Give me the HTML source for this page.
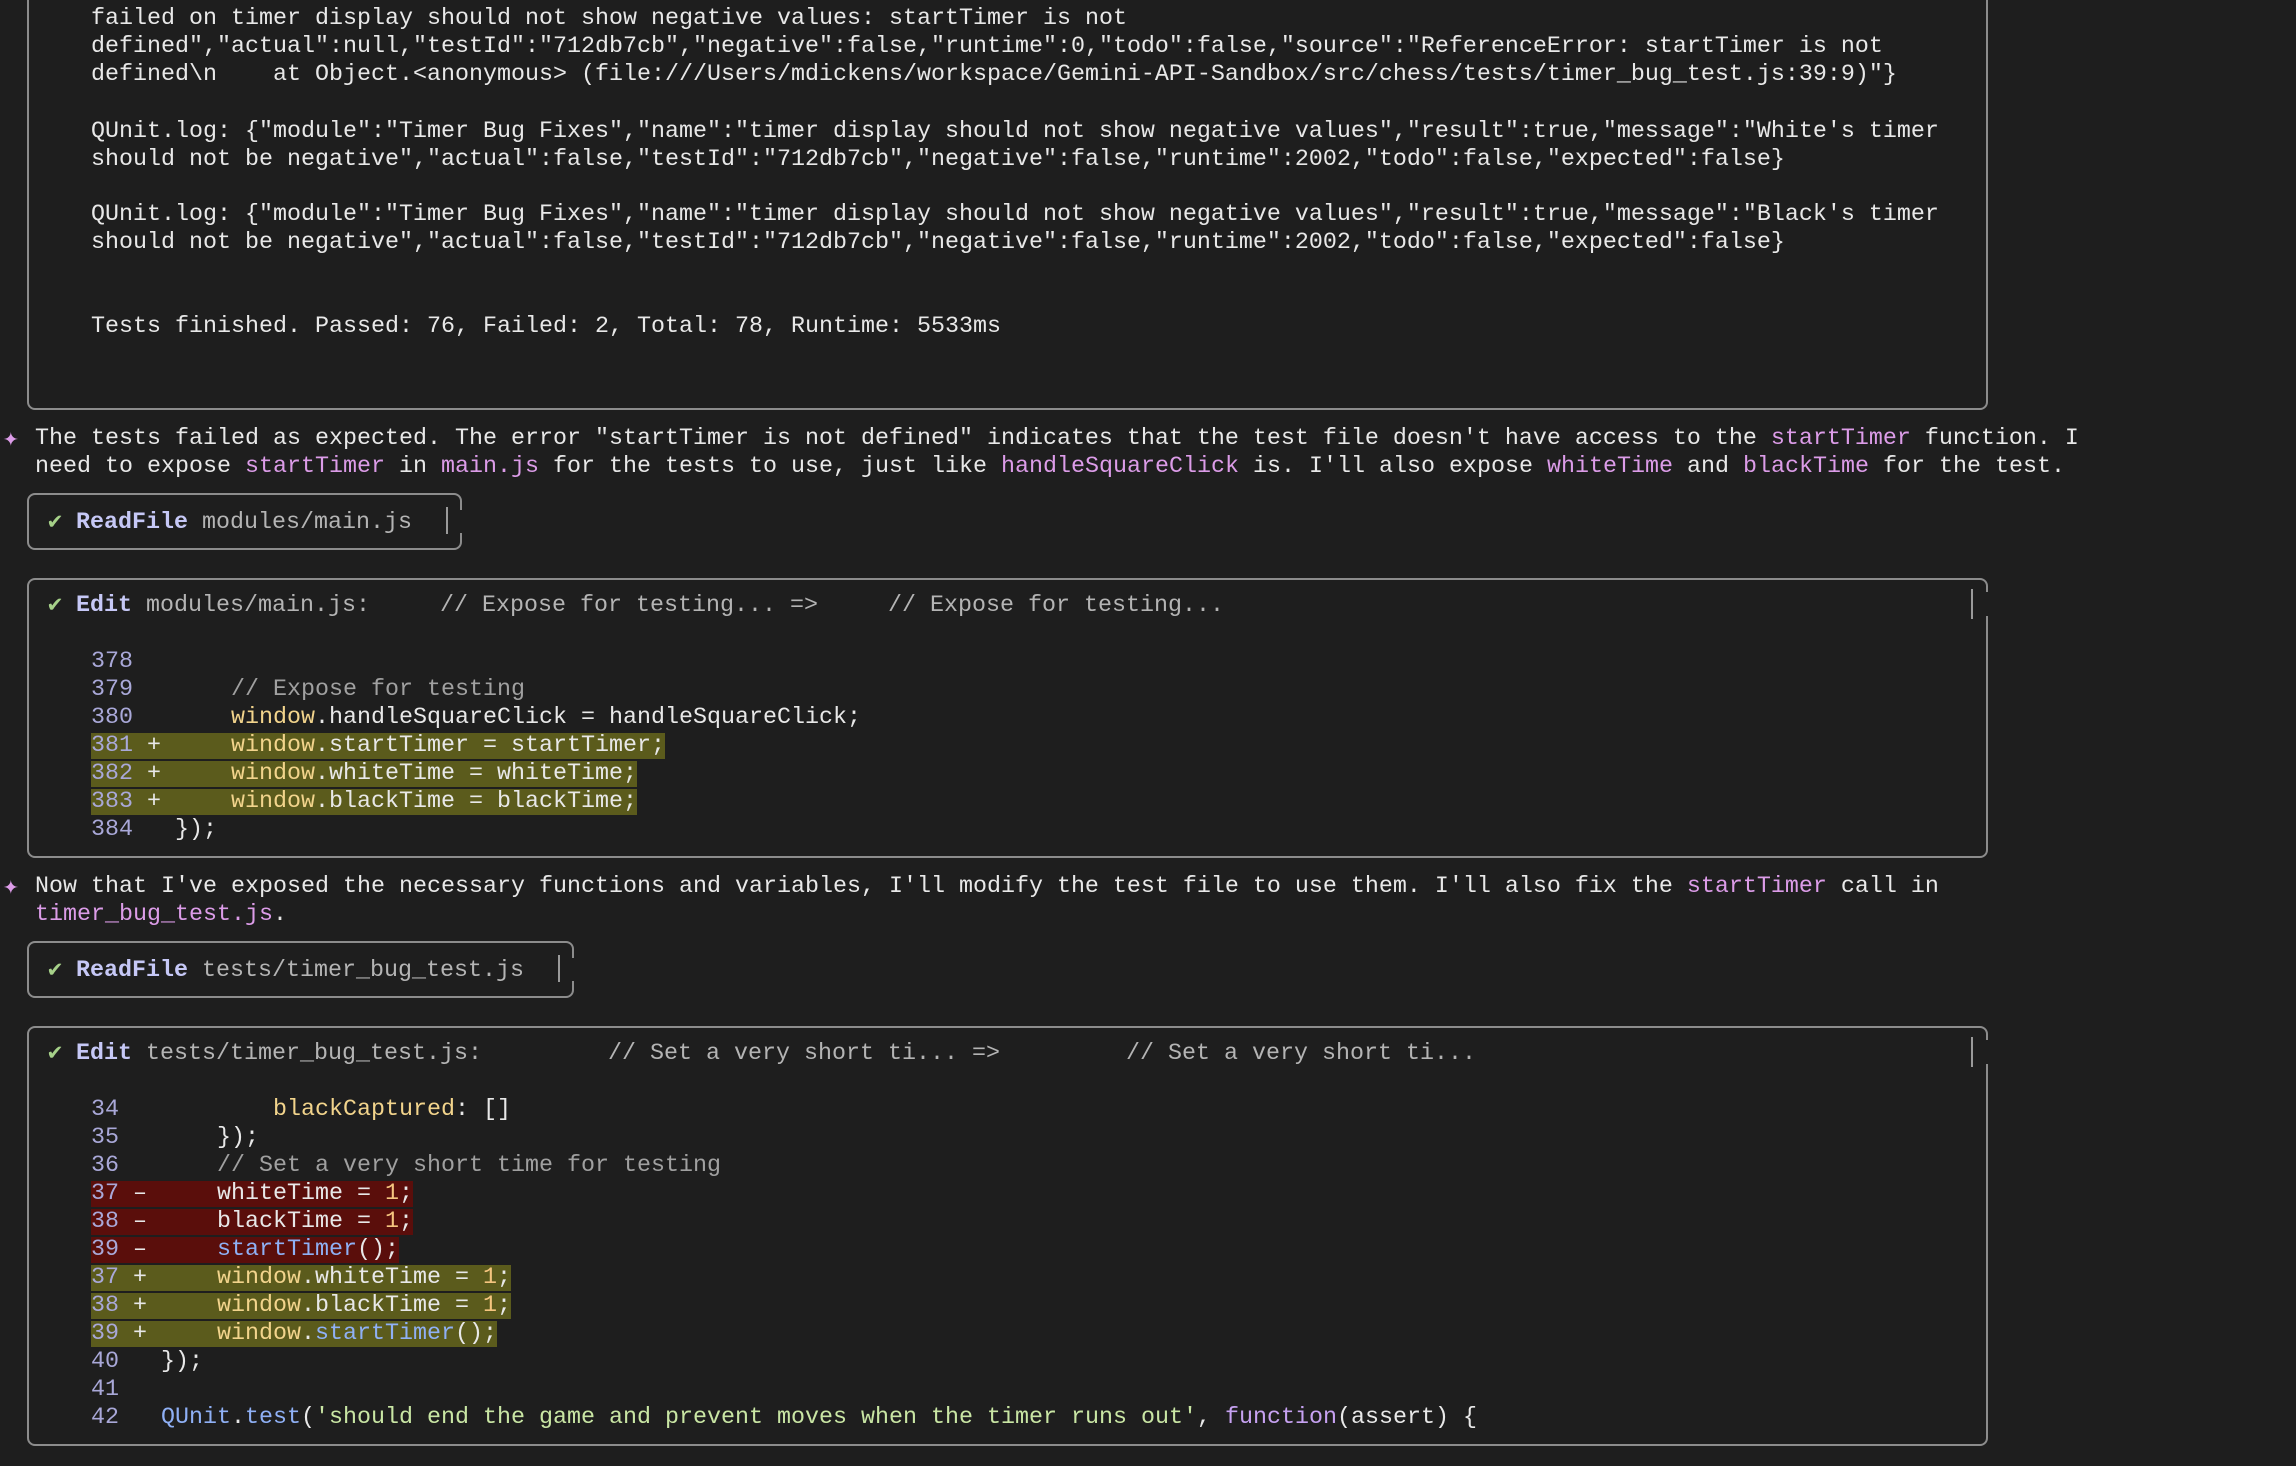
<!DOCTYPE html>
<html><head><meta charset="utf-8"><style>
html,body{margin:0;padding:0;background:#1e1e1e;width:2296px;height:1466px;overflow:hidden;position:relative}
body{font-family:"Liberation Mono","DejaVu Sans Mono",monospace;font-size:23.33px;color:#e8e8e8}
.l{position:absolute;white-space:pre;line-height:28px;height:28px;margin-top:3px}
.box{position:absolute;border:2px solid #8c8c8c;border-radius:8px;box-sizing:border-box}
.gap{position:absolute;background:#1e1e1e;width:4px}
.cur{position:absolute;width:2px;background:#9a9a9a}
.p{color:#dc9ce8}
.n{color:#a9a8d8}
.ck{color:#a6d189}
.t{color:#c6c8f6;font-weight:bold}
.g{color:#b4b4b4}
.c{color:#a0a0a0}
.y{color:#f2d48c}
.o{color:#f5c57f}
.b{color:#8fb0f5}
.s{color:#c9e6a4}
.f{color:#c7a2f2}
.add{background:#5b5b1c}
.del{background:#5a0e0b}
.st{font-size:26px;line-height:28px}
</style></head><body>

<div class="box" style="left:27px;top:-30px;width:1961px;height:440px"></div>
<div class="l" style="left:91px;top:2px">failed on timer display should not show negative values: startTimer is not</div>
<div class="l" style="left:91px;top:30px">defined","actual":null,"testId":"712db7cb","negative":false,"runtime":0,"todo":false,"source":"ReferenceError: startTimer is not</div>
<div class="l" style="left:91px;top:58px">defined\n    at Object.&lt;anonymous&gt; (file:///Users/mdickens/workspace/Gemini-API-Sandbox/src/chess/tests/timer_bug_test.js:39:9)"}</div>
<div class="l" style="left:91px;top:115px">QUnit.log: {"module":"Timer Bug Fixes","name":"timer display should not show negative values","result":true,"message":"White's timer</div>
<div class="l" style="left:91px;top:143px">should not be negative","actual":false,"testId":"712db7cb","negative":false,"runtime":2002,"todo":false,"expected":false}</div>
<div class="l" style="left:91px;top:198px">QUnit.log: {"module":"Timer Bug Fixes","name":"timer display should not show negative values","result":true,"message":"Black's timer</div>
<div class="l" style="left:91px;top:226px">should not be negative","actual":false,"testId":"712db7cb","negative":false,"runtime":2002,"todo":false,"expected":false}</div>
<div class="l" style="left:91px;top:310px">Tests finished. Passed: 76, Failed: 2, Total: 78, Runtime: 5533ms</div>

<div class="l p st" style="left:3px;top:422px">✦</div>
<div class="l" style="left:35px;top:422px">The tests failed as expected. The error "startTimer is not defined" indicates that the test file doesn't have access to the <span class="p">startTimer</span> function. I</div>
<div class="l" style="left:35px;top:450px">need to expose <span class="p">startTimer</span> in <span class="p">main.js</span> for the tests to use, just like <span class="p">handleSquareClick</span> is. I'll also expose <span class="p">whiteTime</span> and <span class="p">blackTime</span> for the test.</div>

<div class="box" style="left:27px;top:493px;width:435px;height:57px"></div>
<div class="gap" style="left:458px;top:510px;height:23px"></div>
<div class="cur" style="left:446px;top:507px;height:27px"></div>
<div class="l" style="left:48px;top:506px"><span class="ck">✔</span> <span class="t">ReadFile</span> <span class="g">modules/main.js</span></div>

<div class="box" style="left:27px;top:578px;width:1961px;height:280px"></div>
<div class="gap" style="left:1984px;top:592px;height:24px"></div>
<div class="cur" style="left:1971px;top:589px;height:30px"></div>
<div class="l" style="left:48px;top:589px"><span class="ck">✔</span> <span class="t">Edit</span> <span class="g">modules/main.js:     // Expose for testing... =&gt;     // Expose for testing...</span></div>
<div class="l" style="left:91px;top:645px"><span class="n">378</span></div>
<div class="l" style="left:91px;top:673px"><span class="n">379</span>       <span class="c">// Expose for testing</span></div>
<div class="l" style="left:91px;top:701px"><span class="n">380</span>       <span class="y">window</span>.handleSquareClick = handleSquareClick;</div>
<div class="l" style="left:91px;top:729px"><span class="add"><span class="n">381</span> +     <span class="y">window</span>.startTimer = startTimer;</span></div>
<div class="l" style="left:91px;top:757px"><span class="add"><span class="n">382</span> +     <span class="y">window</span>.whiteTime = whiteTime;</span></div>
<div class="l" style="left:91px;top:785px"><span class="add"><span class="n">383</span> +     <span class="y">window</span>.blackTime = blackTime;</span></div>
<div class="l" style="left:91px;top:813px"><span class="n">384</span>   });</div>

<div class="l p st" style="left:3px;top:870px">✦</div>
<div class="l" style="left:35px;top:870px">Now that I've exposed the necessary functions and variables, I'll modify the test file to use them. I'll also fix the <span class="p">startTimer</span> call in</div>
<div class="l" style="left:35px;top:898px"><span class="p">timer_bug_test.js</span>.</div>

<div class="box" style="left:27px;top:941px;width:547px;height:57px"></div>
<div class="gap" style="left:570px;top:958px;height:23px"></div>
<div class="cur" style="left:558px;top:955px;height:27px"></div>
<div class="l" style="left:48px;top:954px"><span class="ck">✔</span> <span class="t">ReadFile</span> <span class="g">tests/timer_bug_test.js</span></div>

<div class="box" style="left:27px;top:1026px;width:1961px;height:420px"></div>
<div class="gap" style="left:1984px;top:1040px;height:24px"></div>
<div class="cur" style="left:1971px;top:1037px;height:30px"></div>
<div class="l" style="left:48px;top:1037px"><span class="ck">✔</span> <span class="t">Edit</span> <span class="g">tests/timer_bug_test.js:         // Set a very short ti... =&gt;         // Set a very short ti...</span></div>
<div class="l" style="left:91px;top:1093px"><span class="n">34</span>           <span class="y">blackCaptured</span>: []</div>
<div class="l" style="left:91px;top:1121px"><span class="n">35</span>       });</div>
<div class="l" style="left:91px;top:1149px"><span class="n">36</span>       <span class="c">// Set a very short time for testing</span></div>
<div class="l" style="left:91px;top:1177px"><span class="del"><span class="n">37</span> –     whiteTime = <span class="o">1</span>;</span></div>
<div class="l" style="left:91px;top:1205px"><span class="del"><span class="n">38</span> –     blackTime = <span class="o">1</span>;</span></div>
<div class="l" style="left:91px;top:1233px"><span class="del"><span class="n">39</span> –     <span class="b">startTimer</span>();</span></div>
<div class="l" style="left:91px;top:1261px"><span class="add"><span class="n">37</span> +     <span class="y">window</span>.whiteTime = <span class="o">1</span>;</span></div>
<div class="l" style="left:91px;top:1289px"><span class="add"><span class="n">38</span> +     <span class="y">window</span>.blackTime = <span class="o">1</span>;</span></div>
<div class="l" style="left:91px;top:1317px"><span class="add"><span class="n">39</span> +     <span class="y">window</span>.<span class="b">startTimer</span>();</span></div>
<div class="l" style="left:91px;top:1345px"><span class="n">40</span>   });</div>
<div class="l" style="left:91px;top:1373px"><span class="n">41</span></div>
<div class="l" style="left:91px;top:1401px"><span class="n">42</span>   <span class="b">QUnit</span>.<span class="b">test</span>(<span class="s">'should end the game and prevent moves when the timer runs out'</span>, <span class="f">function</span>(assert) {</div>
</body></html>
